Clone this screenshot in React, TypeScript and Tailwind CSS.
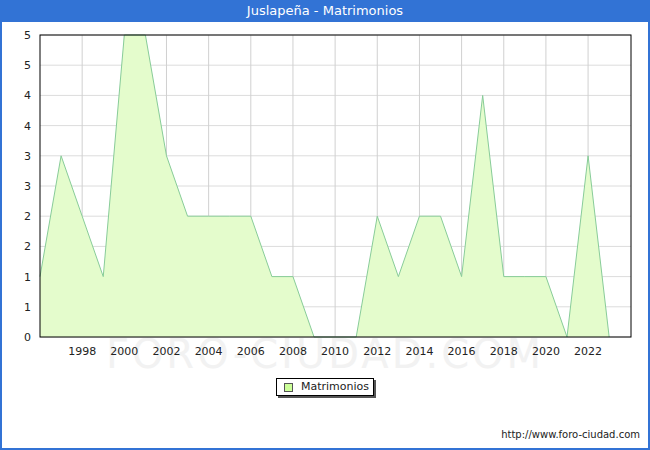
const data = [1,3,2,1,5,5,3,2,2,2,2,1,1,0,0,0,2,1,2,2,1,4,1,1,1,0,3,0];
const X0 = 40, X1 = 631, Y0 = 35, Y1 = 337;
const xs = (i: number) => X0 + i * 21.08;
const ys = (v: number) => Y1 - v * 60.4;

export default function App() {
  const pts = data.map((v, i) => `${xs(i)},${ys(v)}`).join(" ");
  const area = `${xs(0)},${Y1} ${pts} ${xs(data.length - 1)},${Y1}`;
  const yl = ["0","1","1","2","2","3","3","4","4","5","5"];
  return (
    <div className="w-[650px] h-[450px] bg-white relative overflow-hidden" style={{ fontFamily: '"DejaVu Sans", sans-serif' }}>
      <div className="h-[22px] bg-[#3273d5] text-white text-[13px] flex items-center justify-center">Juslapeña - Matrimonios</div>
      <div className="absolute left-0 top-0 w-[2px] h-full bg-[#3273d5]" />
      <div className="absolute right-0 top-0 w-[2px] h-full bg-[#3273d5]" />
      <div className="absolute left-0 bottom-0 w-full h-[2px] bg-[#3273d5]" />
      <svg className="absolute left-0 top-0" width="650" height="450">
        <text x="325" y="368" textAnchor="middle" fontSize="40" fill="#f2f2f2" fontFamily="DejaVu Sans" letterSpacing="3">FORO-CIUDAD.COM</text>
        {yl.map((_, k) => (
          <line key={k} x1={X0} x2={X1} y1={Y1 - k * 30.2} y2={Y1 - k * 30.2} stroke="#dcdcdc" />
        ))}
        {Array.from({ length: 13 }).map((_, k) => (
          <line key={k} x1={xs(2 + 2 * k)} x2={xs(2 + 2 * k)} y1={Y0} y2={Y1} stroke="#d0d0d0" />
        ))}
        <polygon points={area} fill="#e4fccc" />
        <polyline points={pts} fill="none" stroke="#88cc99" strokeWidth="1" />
        <rect x={X0} y={Y0} width={X1 - X0} height={Y1 - Y0} fill="none" stroke="#000" />
        {yl.map((l, k) => (
          <text key={k} x="31" y={Y1 - k * 30.2 + 4} textAnchor="end" fontSize="11" fill="#222">{l}</text>
        ))}
        {Array.from({ length: 13 }).map((_, k) => (
          <text key={k} x={xs(2 + 2 * k)} y="355" textAnchor="middle" fontSize="11" fill="#222">{1998 + 2 * k}</text>
        ))}
      </svg>
      <div className="absolute left-[276px] top-[378px] w-[98px] h-[18px] bg-white border border-black flex items-center gap-[8px] pl-[7px] text-[11px] text-[#222] shadow-[2px_2px_0_#555]">
        <div className="w-[9px] h-[9px] bg-[#ccff99] border border-[#555]" />
        <span>Matrimonios</span>
      </div>
      <div className="absolute right-[10px] top-[427px] text-[10px] text-[#222]">http://www.foro-ciudad.com</div>
    </div>
  );
}
